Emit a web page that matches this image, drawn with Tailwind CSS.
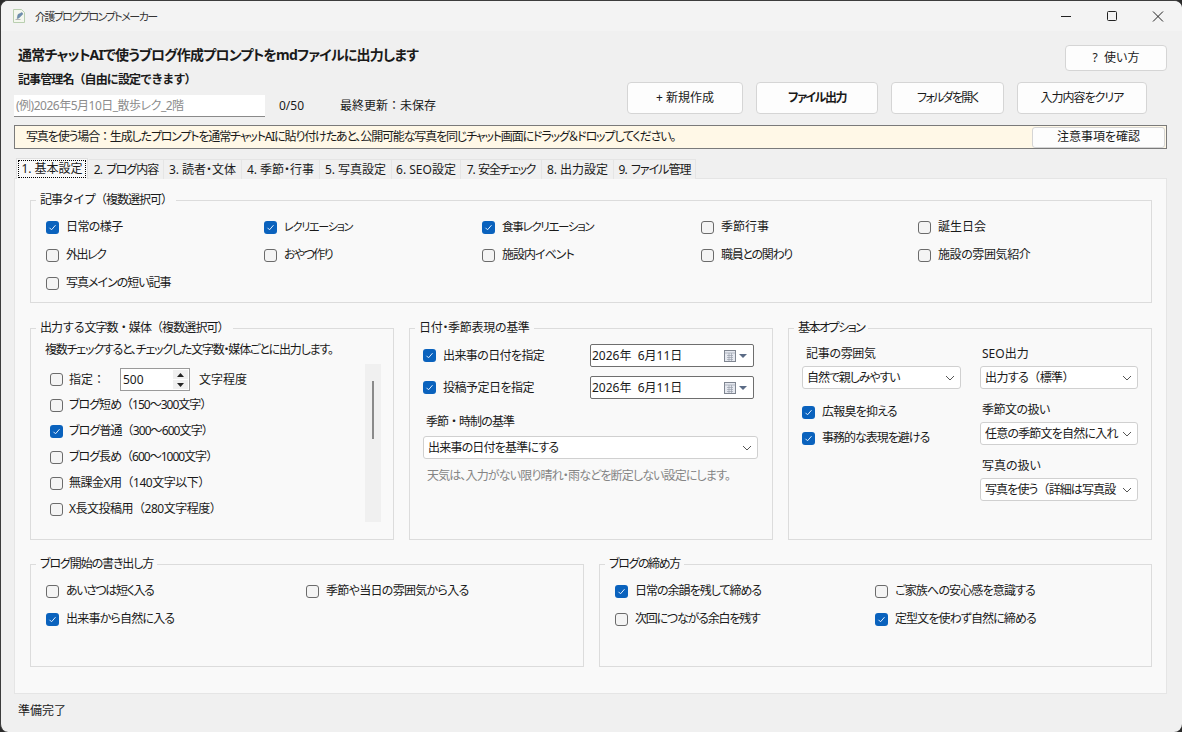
<!DOCTYPE html>
<html lang="ja">
<head>
  <meta charset="UTF-8" />
  <title>介護ブログプロンプトメーカー</title>
  <script src="https://cdn.jsdelivr.net/npm/@tailwindcss/browser@4"></script>
</head>
<body class="bg-[#2b2b2b] overflow-hidden">
<div class="w-[1182px] h-[732px] bg-[#f0f0f0] rounded-[8px] border-l border-t border-[#3c3c3c] overflow-hidden flex flex-col text-[12px] leading-[16px] text-[#1a1a1a] font-['Noto_Sans','Noto_Sans_CJK_JP',sans-serif] [font-feature-settings:'palt']">

  <!-- Title bar -->
  <div class="h-[30px] shrink-0 bg-[#f3f3f3] flex items-center">
    <svg class="ml-[10px] w-[16px] h-[16px]" viewBox="0 0 16 16" fill="none">
      <path d="M2.5 1.5h8l3 3v10h-11z" fill="#f4f7ee" stroke="#b9cfb0"/>
      <path d="M7 6.5l4-2 .8 1.6-4 4-1.6.4z" fill="#6f8fb0" stroke="#5b7896" stroke-width=".5"/>
      <path d="M4.5 11.5h5" stroke="#b5b5b5"/>
    </svg>
    <span class="ml-[8px] pt-[1px] text-[11px] tracking-[-1.5px] text-[#333]">介護ブログプロンプトメーカー</span>
    <div class="ml-auto mr-[1px] flex items-center">
      <svg class="w-[46px] h-[30px]" viewBox="0 0 46 30" fill="none"><path d="M18 15.5h10" stroke="#222"/></svg>
      <svg class="w-[46px] h-[30px]" viewBox="0 0 46 30" fill="none"><rect x="18.5" y="10.5" width="9" height="9" rx="1" stroke="#222"/></svg>
      <svg class="w-[46px] h-[30px]" viewBox="0 0 46 30" fill="none"><path d="M18 10.5l10 10M28 10.5l-10 10" stroke="#222"/></svg>
    </div>
  </div>

  <!-- Header -->
  <div class="pl-[13px] pr-[15px] pt-[14px]">
    <div class="flex justify-between h-[26px]">
      <h1 class="pl-[4px] text-[14px] leading-[20px] font-bold tracking-[-0.8px]">通常チャットAIで使うブログ作成プロンプトをmdファイルに出力します</h1>
      <button class="w-[102px] h-[26px] bg-[#fdfdfd] border border-[#d5d5d5] rounded-[4px]">?&nbsp; 使い方</button>
    </div>
    <div class="flex justify-between h-[46px]">
      <div>
        <div class="pl-[4px] pt-[1px] font-bold tracking-[-0.9px] [font-feature-settings:normal]">記事管理名（自由に設定できます）</div>
        <div class="flex items-center mt-[7px]">
          <div class="w-[251px] h-[22px] bg-white border-b border-[#8a8a8a] pl-[2px] leading-[21px] text-[#8c8c8c] tracking-[-0.5px]">(例)2026年5月10日_散歩レク_2階</div>
          <span class="ml-[14px]">0/50</span>
          <span class="ml-[36px] [font-feature-settings:normal]">最終更新：未保存</span>
        </div>
      </div>
      <div class="flex gap-[13px] pt-[11px] pr-[20px]">
        <button class="w-[116px] h-[32px] bg-[#fdfdfd] border border-[#d5d5d5] rounded-[4px]">+ 新規作成</button>
        <button class="w-[122px] h-[32px] bg-[#fdfdfd] border border-[#d5d5d5] rounded-[4px] font-bold tracking-[-1.5px]">ファイル出力</button>
        <button class="w-[113px] h-[32px] bg-[#fdfdfd] border border-[#d5d5d5] rounded-[4px] tracking-[-1.7px]">フォルダを開く</button>
        <button class="w-[130px] h-[32px] bg-[#fdfdfd] border border-[#d5d5d5] rounded-[4px] tracking-[-1px]">入力内容をクリア</button>
      </div>
    </div>

    <!-- Notice -->
    <div class="mt-[8px] h-[24px] bg-[#fff8e7] border border-[#7a7a7a] flex items-center justify-between pl-[11px] pr-[1px]">
      <span class="tracking-[-1.15px]">写真を使う場合<span class="[font-feature-settings:normal]">：</span>生成したプロンプトを通常チャットAIに貼り付けたあと、公開可能な写真を同じチャット画面にドラッグ＆ドロップしてください。</span>
      <button class="w-[133px] h-[21px] bg-[#fdfdfd] border border-[#d5d5d5] rounded-[3px]">注意事項を確認</button>
    </div>

    <!-- Tabs -->
    <div class="mt-[9px] h-[21px] flex items-end pl-[2px] relative z-10">
      <div class="w-[72px] h-[21px] bg-[#f9f9f9] border border-b-0 border-[#e0e0e0] p-[1px]"><div class="h-[18px] border border-dotted border-black text-center leading-[16px]">1. 基本設定</div></div>
      <div class="ml-[1px] w-[75px] h-[20px] bg-[#f0f0f0] border-r border-t border-[#e5e5e5] text-center leading-[20px] tracking-[-1px]">2.&nbsp;&nbsp;ブログ内容</div>
      <div class="w-[78px] h-[20px] bg-[#f0f0f0] border-r border-t border-[#e5e5e5] text-center leading-[20px]">3. 読者・文体</div>
      <div class="w-[78px] h-[20px] bg-[#f0f0f0] border-r border-t border-[#e5e5e5] text-center leading-[20px]">4. 季節・行事</div>
      <div class="w-[72px] h-[20px] bg-[#f0f0f0] border-r border-t border-[#e5e5e5] text-center leading-[20px]">5. 写真設定</div>
      <div class="w-[69px] h-[20px] bg-[#f0f0f0] border-r border-t border-[#e5e5e5] text-center leading-[20px]">6. SEO設定</div>
      <div class="w-[81px] h-[20px] bg-[#f0f0f0] border-r border-t border-[#e5e5e5] text-center leading-[20px] tracking-[-1.3px]">7.&nbsp;&nbsp;安全チェック</div>
      <div class="w-[72px] h-[20px] bg-[#f0f0f0] border-r border-t border-[#e5e5e5] text-center leading-[20px]">8. 出力設定</div>
      <div class="w-[82px] h-[20px] bg-[#f0f0f0] border-r border-t border-[#e5e5e5] text-center leading-[20px] tracking-[-1px]">9.&nbsp;&nbsp;ファイル管理</div>
    </div>

    <!-- Panel -->
    <div class="h-[516px] bg-[#f9f9f9] border border-[#e5e5e5] pl-[15px] pr-[14px] pt-[21px] -mt-[1px]">

      <!-- 記事タイプ -->
      <section class="h-[103px] border border-[#dcdcdc]">
        <div class="-mt-[9px] ml-[5px] w-fit bg-[#f9f9f9] px-[4px] tracking-[-1px] [font-feature-settings:normal]">記事タイプ（複数選択可）</div>
        <div class="mt-[5px] pl-[15px] grid grid-cols-[218px_218px_219px_217px_200px] auto-rows-[28px] items-center">
          <label class="flex items-center gap-[7px]"><span class="w-[13px] h-[13px] rounded-[3px] bg-[#0a62bd] flex items-center justify-center"><svg class="w-[9px] h-[9px]" viewBox="0 0 9 9" fill="none"><path d="M1.5 4.8l2 2 4-4.6" stroke="#dfeeff"/></svg></span><span class="tracking-[-0.6px]">日常の様子</span></label>
          <label class="flex items-center gap-[7px]"><span class="w-[13px] h-[13px] rounded-[3px] bg-[#0a62bd] flex items-center justify-center"><svg class="w-[9px] h-[9px]" viewBox="0 0 9 9" fill="none"><path d="M1.5 4.8l2 2 4-4.6" stroke="#dfeeff"/></svg></span><span class="text-[11px] tracking-[-1.2px]">レクリエーション</span></label>
          <label class="flex items-center gap-[7px]"><span class="w-[13px] h-[13px] rounded-[3px] bg-[#0a62bd] flex items-center justify-center"><svg class="w-[9px] h-[9px]" viewBox="0 0 9 9" fill="none"><path d="M1.5 4.8l2 2 4-4.6" stroke="#dfeeff"/></svg></span><span class="text-[11.5px] tracking-[-1.3px]">食事レクリエーション</span></label>
          <label class="flex items-center gap-[7px]"><span class="w-[13px] h-[13px] rounded-[3px] border border-[#6b6b6b] bg-[#f4f4f4]"></span>季節行事</label>
          <label class="flex items-center gap-[7px]"><span class="w-[13px] h-[13px] rounded-[3px] border border-[#6b6b6b] bg-[#f4f4f4]"></span>誕生日会</label>
          <label class="flex items-center gap-[7px]"><span class="w-[13px] h-[13px] rounded-[3px] border border-[#6b6b6b] bg-[#f4f4f4]"></span><span class="tracking-[-1.5px]">外出レク</span></label>
          <label class="flex items-center gap-[7px]"><span class="w-[13px] h-[13px] rounded-[3px] border border-[#6b6b6b] bg-[#f4f4f4]"></span><span class="tracking-[-1.6px]">おやつ作り</span></label>
          <label class="flex items-center gap-[7px]"><span class="w-[13px] h-[13px] rounded-[3px] border border-[#6b6b6b] bg-[#f4f4f4]"></span><span class="tracking-[-1px]">施設内イベント</span></label>
          <label class="flex items-center gap-[7px]"><span class="w-[13px] h-[13px] rounded-[3px] border border-[#6b6b6b] bg-[#f4f4f4]"></span><span class="tracking-[-1.3px]">職員との関わり</span></label>
          <label class="flex items-center gap-[7px]"><span class="w-[13px] h-[13px] rounded-[3px] border border-[#6b6b6b] bg-[#f4f4f4]"></span><span class="tracking-[-0.4px]">施設の雰囲気紹介</span></label>
          <label class="flex items-center gap-[7px]"><span class="w-[13px] h-[13px] rounded-[3px] border border-[#6b6b6b] bg-[#f4f4f4]"></span><span class="tracking-[-1px]">写真メインの短い記事</span></label>
        </div>
      </section>

      <!-- Middle row -->
      <div class="mt-[25px] flex gap-[15px] h-[212px]">

        <section class="w-[364px] border border-[#dcdcdc]">
          <div class="-mt-[9px] ml-[5px] w-fit bg-[#f9f9f9] px-[4px] tracking-[-0.9px] [font-feature-settings:normal]">出力する文字数・媒体（複数選択可）</div>
          <p class="mt-[6px] ml-[14px] tracking-[-1.2px]">複数チェックすると、チェックした文字数・媒体ごとに出力します。</p>
          <div class="mt-[6px] flex">
            <div class="ml-[19px] w-[315px] pt-[4px]">
              <div class="h-[23px] flex items-center">
                <span class="w-[13px] h-[13px] rounded-[3px] border border-[#6b6b6b] bg-[#f4f4f4]"></span>
                <span class="ml-[6px] w-[51px] [font-feature-settings:normal]">指定：</span>
                <div class="w-[70px] h-[23px] bg-white border border-[#9a9a9a] flex items-center pl-[2px]">500
                  <div class="ml-auto mr-[1px] w-[15px] h-[19px] flex flex-col gap-[1px]">
                    <span class="flex-1 bg-[#f0f0f0] flex items-center justify-center"><svg class="w-[7px] h-[4px]" viewBox="0 0 7 4"><path d="M3.5 0L7 4H0z" fill="#222"/></svg></span>
                    <span class="flex-1 bg-[#f0f0f0] flex items-center justify-center"><svg class="w-[7px] h-[4px]" viewBox="0 0 7 4"><path d="M0 0h7L3.5 4z" fill="#222"/></svg></span>
                  </div>
                </div>
                <span class="ml-[9px]">文字程度</span>
              </div>
              <label class="mt-[1px] h-[26px] flex items-center gap-[6px]"><span class="w-[13px] h-[13px] rounded-[3px] border border-[#6b6b6b] bg-[#f4f4f4]"></span><span class="tracking-[-1px]">ブログ短め<span class="[font-feature-settings:normal]">（</span>150〜300文字<span class="[font-feature-settings:normal]">）</span></span></label>
              <label class="h-[26px] flex items-center gap-[6px]"><span class="w-[13px] h-[13px] rounded-[3px] bg-[#0a62bd] flex items-center justify-center"><svg class="w-[9px] h-[9px]" viewBox="0 0 9 9" fill="none"><path d="M1.5 4.8l2 2 4-4.6" stroke="#dfeeff"/></svg></span><span class="tracking-[-0.9px]">ブログ普通<span class="[font-feature-settings:normal]">（</span>300〜600文字<span class="[font-feature-settings:normal]">）</span></span></label>
              <label class="h-[26px] flex items-center gap-[6px]"><span class="w-[13px] h-[13px] rounded-[3px] border border-[#6b6b6b] bg-[#f4f4f4]"></span><span class="tracking-[-1px]">ブログ長め<span class="[font-feature-settings:normal]">（</span>600〜1000文字<span class="[font-feature-settings:normal]">）</span></span></label>
              <label class="h-[26px] flex items-center gap-[6px]"><span class="w-[13px] h-[13px] rounded-[3px] border border-[#6b6b6b] bg-[#f4f4f4]"></span><span class="tracking-[-0.5px]">無課金X用<span class="[font-feature-settings:normal]">（</span>140文字以下<span class="[font-feature-settings:normal]">）</span></span></label>
              <label class="h-[26px] flex items-center gap-[6px]"><span class="w-[13px] h-[13px] rounded-[3px] border border-[#6b6b6b] bg-[#f4f4f4]"></span><span class="tracking-[-0.5px]">X長文投稿用<span class="[font-feature-settings:normal]">（</span>280文字程度<span class="[font-feature-settings:normal]">）</span></span></label>
            </div>
            <div class="w-[16px] h-[158px] bg-[#f0f0f0] pt-[17px] flex justify-center">
              <div class="w-[2px] h-[58px] bg-[#8a8a8a]"></div>
            </div>
          </div>
        </section>

        <section class="w-[364px] border border-[#dcdcdc]">
          <div class="-mt-[9px] ml-[5px] w-fit bg-[#f9f9f9] px-[4px] tracking-[-0.3px]">日付・季節表現の基準</div>
          <div class="mt-[8px] ml-[13px] w-[331px] h-[23px] flex items-center">
            <span class="w-[13px] h-[13px] rounded-[3px] bg-[#0a62bd] flex items-center justify-center"><svg class="w-[9px] h-[9px]" viewBox="0 0 9 9" fill="none"><path d="M1.5 4.8l2 2 4-4.6" stroke="#dfeeff"/></svg></span>
            <span class="ml-[7px] tracking-[-0.6px]">出来事の日付を指定</span>
            <div class="ml-auto w-[164px] h-[23px] bg-white border border-[#6e6e6e] rounded-[2px] flex items-center pl-[1px] pr-[5px]">2026年&nbsp; 6月11日
              <svg class="ml-auto w-[24px] h-[14px]" viewBox="0 0 24 14" fill="none"><rect x=".5" y="1.5" width="11" height="11" fill="#e6e9f0" stroke="#7f8590"/><path d="M.5 4h11M3 6.5h6M3 8.5h6M3 10.5h6M5 4v8M7.5 4v8" stroke="#9aa0ac" stroke-width=".7"/><path d="M15 5h8l-4 4z" fill="#5b6b85"/></svg>
            </div>
          </div>
          <div class="mt-[9px] ml-[13px] w-[331px] h-[23px] flex items-center">
            <span class="w-[13px] h-[13px] rounded-[3px] bg-[#0a62bd] flex items-center justify-center"><svg class="w-[9px] h-[9px]" viewBox="0 0 9 9" fill="none"><path d="M1.5 4.8l2 2 4-4.6" stroke="#dfeeff"/></svg></span>
            <span class="ml-[7px] tracking-[-0.5px]">投稿予定日を指定</span>
            <div class="ml-auto w-[164px] h-[23px] bg-white border border-[#6e6e6e] rounded-[2px] flex items-center pl-[1px] pr-[5px]">2026年&nbsp; 6月11日
              <svg class="ml-auto w-[24px] h-[14px]" viewBox="0 0 24 14" fill="none"><rect x=".5" y="1.5" width="11" height="11" fill="#e6e9f0" stroke="#7f8590"/><path d="M.5 4h11M3 6.5h6M3 8.5h6M3 10.5h6M5 4v8M7.5 4v8" stroke="#9aa0ac" stroke-width=".7"/><path d="M15 5h8l-4 4z" fill="#5b6b85"/></svg>
            </div>
          </div>
          <div class="mt-[15px] ml-[16px] tracking-[-1px] [font-feature-settings:normal]">季節・時制の基準</div>
          <div class="mt-[6px] ml-[13px] w-[335px] h-[23px] bg-white border border-[#d0d0d0] rounded-[3px] flex items-center pl-[4px] pr-[5px]"><span class="tracking-[-0.8px]">出来事の日付を基準にする</span>
            <svg class="ml-auto w-[10px] h-[6px]" viewBox="0 0 10 6" fill="none"><path d="M1 1l4 4 4-4" stroke="#555"/></svg>
          </div>
          <p class="mt-[9px] ml-[17px] text-[#858585] tracking-[-0.85px]">天気は、入力がない限り晴れ・雨などを断定しない設定にします。</p>
        </section>

        <section class="w-[364px] border border-[#dcdcdc]">
          <div class="-mt-[9px] ml-[5px] w-fit bg-[#f9f9f9] px-[4px] tracking-[-1.5px]">基本オプション</div>
          <div class="flex mt-[10px] pl-[13px] gap-[19px]">
            <div class="w-[159px]">
              <div class="pl-[4px] tracking-[-0.3px]">記事の雰囲気</div>
              <div class="mt-[4px] h-[23px] bg-white border border-[#d0d0d0] rounded-[3px] flex items-center pl-[4px] pr-[5px]"><span class="tracking-[-1.1px]">自然で親しみやすい</span>
                <svg class="ml-auto w-[10px] h-[6px]" viewBox="0 0 10 6" fill="none"><path d="M1 1l4 4 4-4" stroke="#555"/></svg>
              </div>
              <label class="mt-[15px] flex items-center gap-[7px]"><span class="w-[13px] h-[13px] rounded-[3px] bg-[#0a62bd] flex items-center justify-center"><svg class="w-[9px] h-[9px]" viewBox="0 0 9 9" fill="none"><path d="M1.5 4.8l2 2 4-4.6" stroke="#dfeeff"/></svg></span><span class="tracking-[-0.8px]">広報臭を抑える</span></label>
              <label class="mt-[10px] flex items-center gap-[7px]"><span class="w-[13px] h-[13px] rounded-[3px] bg-[#0a62bd] flex items-center justify-center"><svg class="w-[9px] h-[9px]" viewBox="0 0 9 9" fill="none"><path d="M1.5 4.8l2 2 4-4.6" stroke="#dfeeff"/></svg></span><span class="tracking-[-1px]">事務的な表現を避ける</span></label>
            </div>
            <div class="w-[158px]">
              <div class="pl-[2px]">SEO出力</div>
              <div class="mt-[4px] h-[23px] bg-white border border-[#d0d0d0] rounded-[3px] flex items-center pl-[4px] pr-[5px]"><span class="tracking-[-0.6px]">出力する<span class="[font-feature-settings:normal]">（</span>標準<span class="[font-feature-settings:normal]">）</span></span>
                <svg class="ml-auto w-[10px] h-[6px]" viewBox="0 0 10 6" fill="none"><path d="M1 1l4 4 4-4" stroke="#555"/></svg>
              </div>
              <div class="mt-[13px] pl-[2px] tracking-[-0.5px]">季節文の扱い</div>
              <div class="mt-[4px] h-[23px] bg-white border border-[#d0d0d0] rounded-[3px] flex items-center pl-[4px] pr-[5px]"><span class="whitespace-nowrap tracking-[-0.8px]">任意の季節文を自然に入れ</span>
                <svg class="ml-auto w-[10px] h-[6px]" viewBox="0 0 10 6" fill="none"><path d="M1 1l4 4 4-4" stroke="#555"/></svg>
              </div>
              <div class="mt-[13px] pl-[2px]">写真の扱い</div>
              <div class="mt-[4px] h-[23px] bg-white border border-[#d0d0d0] rounded-[3px] flex items-center pl-[4px] pr-[5px]"><span class="whitespace-nowrap tracking-[-0.9px]">写真を使う<span class="[font-feature-settings:normal]">（</span>詳細は写真設</span>
                <svg class="ml-auto w-[10px] h-[6px]" viewBox="0 0 10 6" fill="none"><path d="M1 1l4 4 4-4" stroke="#555"/></svg>
              </div>
            </div>
          </div>
        </section>
      </div>

      <!-- Bottom row -->
      <div class="mt-[24px] flex gap-[15px] h-[103px]">
        <section class="w-[554px] border border-[#dcdcdc]">
          <div class="-mt-[9px] ml-[5px] w-fit bg-[#f9f9f9] px-[4px] tracking-[-1.1px]">ブログ開始の書き出し方</div>
          <div class="mt-[5px] pl-[15px] grid grid-cols-[260px_260px] auto-rows-[28px] items-center">
            <label class="flex items-center gap-[7px]"><span class="w-[13px] h-[13px] rounded-[3px] border border-[#6b6b6b] bg-[#f4f4f4]"></span><span class="tracking-[-1.4px]">あいさつは短く入る</span></label>
            <label class="flex items-center gap-[7px]"><span class="w-[13px] h-[13px] rounded-[3px] border border-[#6b6b6b] bg-[#f4f4f4]"></span><span class="tracking-[-0.7px]">季節や当日の雰囲気から入る</span></label>
            <label class="flex items-center gap-[7px]"><span class="w-[13px] h-[13px] rounded-[3px] bg-[#0a62bd] flex items-center justify-center"><svg class="w-[9px] h-[9px]" viewBox="0 0 9 9" fill="none"><path d="M1.5 4.8l2 2 4-4.6" stroke="#dfeeff"/></svg></span><span class="tracking-[-0.8px]">出来事から自然に入る</span></label>
          </div>
        </section>
        <section class="w-[553px] border border-[#dcdcdc]">
          <div class="-mt-[9px] ml-[5px] w-fit bg-[#f9f9f9] px-[4px] tracking-[-1.4px]">ブログの締め方</div>
          <div class="mt-[5px] pl-[15px] grid grid-cols-[260px_260px] auto-rows-[28px] items-center">
            <label class="flex items-center gap-[7px]"><span class="w-[13px] h-[13px] rounded-[3px] bg-[#0a62bd] flex items-center justify-center"><svg class="w-[9px] h-[9px]" viewBox="0 0 9 9" fill="none"><path d="M1.5 4.8l2 2 4-4.6" stroke="#dfeeff"/></svg></span><span class="tracking-[-1px]">日常の余韻を残して締める</span></label>
            <label class="flex items-center gap-[7px]"><span class="w-[13px] h-[13px] rounded-[3px] border border-[#6b6b6b] bg-[#f4f4f4]"></span><span class="tracking-[-0.85px]">ご家族への安心感を意識する</span></label>
            <label class="flex items-center gap-[7px]"><span class="w-[13px] h-[13px] rounded-[3px] border border-[#6b6b6b] bg-[#f4f4f4]"></span><span class="tracking-[-1.2px]">次回につながる余白を残す</span></label>
            <label class="flex items-center gap-[7px]"><span class="w-[13px] h-[13px] rounded-[3px] bg-[#0a62bd] flex items-center justify-center"><svg class="w-[9px] h-[9px]" viewBox="0 0 9 9" fill="none"><path d="M1.5 4.8l2 2 4-4.6" stroke="#dfeeff"/></svg></span><span class="tracking-[-0.9px]">定型文を使わず自然に締める</span></label>
          </div>
        </section>
      </div>
    </div>

    <!-- Status -->
    <div class="mt-[9px] pl-[4px]">準備完了</div>
  </div>
</div>
</body>
</html>
